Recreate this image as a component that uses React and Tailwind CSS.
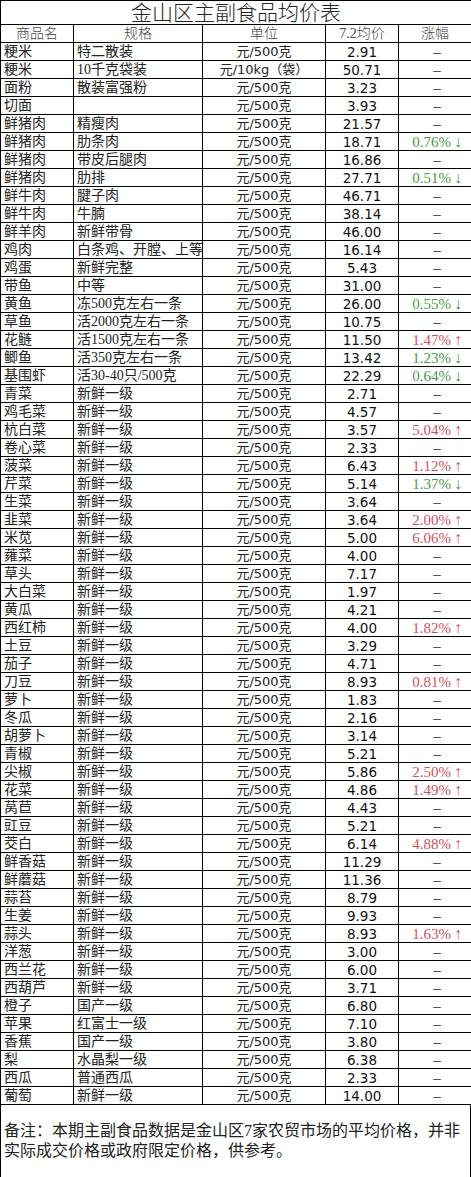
import React from 'react';

const rows = [
  ['粳米', '特二散装', '元/500克', '2.91', ''],
  ['粳米', '10千克袋装', '元/10kg（袋）', '50.71', ''],
  ['面粉', '散装富强粉', '元/500克', '3.23', ''],
  ['切面', '', '元/500克', '3.93', ''],
  ['鲜猪肉', '精瘦肉', '元/500克', '21.57', ''],
  ['鲜猪肉', '肋条肉', '元/500克', '18.71', '0.76%↓'],
  ['鲜猪肉', '带皮后腿肉', '元/500克', '16.86', ''],
  ['鲜猪肉', '肋排', '元/500克', '27.71', '0.51%↓'],
  ['鲜牛肉', '腱子肉', '元/500克', '46.71', ''],
  ['鲜牛肉', '牛腩', '元/500克', '38.14', ''],
  ['鲜羊肉', '新鲜带骨', '元/500克', '46.00', ''],
  ['鸡肉', '白条鸡、开膛、上等', '元/500克', '16.14', ''],
  ['鸡蛋', '新鲜完整', '元/500克', '5.43', ''],
  ['带鱼', '中等', '元/500克', '31.00', ''],
  ['黄鱼', '冻500克左右一条', '元/500克', '26.00', '0.55%↓'],
  ['草鱼', '活2000克左右一条', '元/500克', '10.75', ''],
  ['花鲢', '活1500克左右一条', '元/500克', '11.50', '1.47%↑'],
  ['鲫鱼', '活350克左右一条', '元/500克', '13.42', '1.23%↓'],
  ['基围虾', '活30-40只/500克', '元/500克', '22.29', '0.64%↓'],
  ['青菜', '新鲜一级', '元/500克', '2.71', ''],
  ['鸡毛菜', '新鲜一级', '元/500克', '4.57', ''],
  ['杭白菜', '新鲜一级', '元/500克', '3.57', '5.04%↑'],
  ['卷心菜', '新鲜一级', '元/500克', '2.33', ''],
  ['菠菜', '新鲜一级', '元/500克', '6.43', '1.12%↑'],
  ['芹菜', '新鲜一级', '元/500克', '5.14', '1.37%↓'],
  ['生菜', '新鲜一级', '元/500克', '3.64', ''],
  ['韭菜', '新鲜一级', '元/500克', '3.64', '2.00%↑'],
  ['米苋', '新鲜一级', '元/500克', '5.00', '6.06%↑'],
  ['蕹菜', '新鲜一级', '元/500克', '4.00', ''],
  ['草头', '新鲜一级', '元/500克', '7.17', ''],
  ['大白菜', '新鲜一级', '元/500克', '1.97', ''],
  ['黄瓜', '新鲜一级', '元/500克', '4.21', ''],
  ['西红柿', '新鲜一级', '元/500克', '4.00', '1.82%↑'],
  ['土豆', '新鲜一级', '元/500克', '3.29', ''],
  ['茄子', '新鲜一级', '元/500克', '4.71', ''],
  ['刀豆', '新鲜一级', '元/500克', '8.93', '0.81%↑'],
  ['萝卜', '新鲜一级', '元/500克', '1.83', ''],
  ['冬瓜', '新鲜一级', '元/500克', '2.16', ''],
  ['胡萝卜', '新鲜一级', '元/500克', '3.14', ''],
  ['青椒', '新鲜一级', '元/500克', '5.21', ''],
  ['尖椒', '新鲜一级', '元/500克', '5.86', '2.50%↑'],
  ['花菜', '新鲜一级', '元/500克', '4.86', '1.49%↑'],
  ['莴苣', '新鲜一级', '元/500克', '4.43', ''],
  ['豇豆', '新鲜一级', '元/500克', '5.21', ''],
  ['茭白', '新鲜一级', '元/500克', '6.14', '4.88%↑'],
  ['鲜香菇', '新鲜一级', '元/500克', '11.29', ''],
  ['鲜蘑菇', '新鲜一级', '元/500克', '11.36', ''],
  ['蒜苔', '新鲜一级', '元/500克', '8.79', ''],
  ['生姜', '新鲜一级', '元/500克', '9.93', ''],
  ['蒜头', '新鲜一级', '元/500克', '8.93', '1.63%↑'],
  ['洋葱', '新鲜一级', '元/500克', '3.00', ''],
  ['西兰花', '新鲜一级', '元/500克', '6.00', ''],
  ['西葫芦', '新鲜一级', '元/500克', '3.71', ''],
  ['橙子', '国产一级', '元/500克', '6.80', ''],
  ['苹果', '红富士一级', '元/500克', '7.10', ''],
  ['香蕉', '国产一级', '元/500克', '3.80', ''],
  ['梨', '水晶梨一级', '元/500克', '6.38', ''],
  ['西瓜', '普通西瓜', '元/500克', '2.33', ''],
  ['葡萄', '新鲜一级', '元/500克', '14.00', ''],
];

const serif = "font-['Liberation_Serif','Noto_Sans_CJK_SC',serif]";
const sans = "font-['DejaVu_Sans','Noto_Sans_CJK_SC',sans-serif]";

export default function App() {
  return (
    <div className="w-[471px] bg-white text-black">
      <table className="w-[471px] table-fixed border-collapse">
        <colgroup>
          <col className="w-[73px]" />
          <col className="w-[129px]" />
          <col className="w-[123px]" />
          <col className="w-[73px]" />
          <col className="w-[73px]" />
        </colgroup>
        <thead>
          <tr className="h-[24px]">
            <th colSpan={5} className={`border border-black p-0 text-[21px] leading-[22px] font-light text-[#222] ${serif}`}>
              金山区主副食品均价表
            </th>
          </tr>
          <tr className="h-[18px]">
            {['商品名', '规格', '单位', '7.2均价', '涨幅'].map((h) => (
              <th key={h} className={`border border-black p-0 text-[14px] leading-[16px] font-light text-[#444] ${serif}`}>{h}</th>
            ))}
          </tr>
        </thead>
        <tbody>
          {rows.map((r, i) => {
            const up = r[4].includes('↑');
            return (
              <tr key={i} className="h-[18px]">
                <td className={`border border-black p-0 pl-[3px] text-[14px] leading-[16px] text-[#222] whitespace-nowrap ${serif}`}>{r[0]}</td>
                <td className={`border border-black p-0 pl-[3px] text-[14px] leading-[16px] text-[#222] whitespace-nowrap ${serif}`}>{r[1]}</td>
                <td className={`border border-black p-0 text-center text-[13px] leading-[16px] text-[#222] whitespace-nowrap ${sans}`}>{r[2]}</td>
                <td className={`border border-black p-0 text-center text-[13.5px] leading-[16px] text-[#111] ${sans}`}>{r[3]}</td>
                <td className={`border border-black p-0 pl-[4px] text-center text-[15px] leading-[16px] whitespace-nowrap ${serif} ${r[4] ? (up ? 'text-[#d4505c]' : 'text-[#4a9a4a]') : 'text-[#222]'}`}>
                  {r[4] ? (
                    <>
                      {r[4].slice(0, -1)}
                      <span className="ml-[3px] text-[16px]">{r[4].slice(-1)}</span>
                    </>
                  ) : '–'}
                </td>
              </tr>
            );
          })}
        </tbody>
      </table>
      <div className={`h-[73px] border border-t-0 border-black pl-[3px] pt-[16px] text-[16px] leading-[20px] text-[#222] ${serif}`}>
        备注：本期主副食品数据是金山区7家农贸市场的平均价格，并非实际成交价格或政府限定价格，供参考。
      </div>
    </div>
  );
}
